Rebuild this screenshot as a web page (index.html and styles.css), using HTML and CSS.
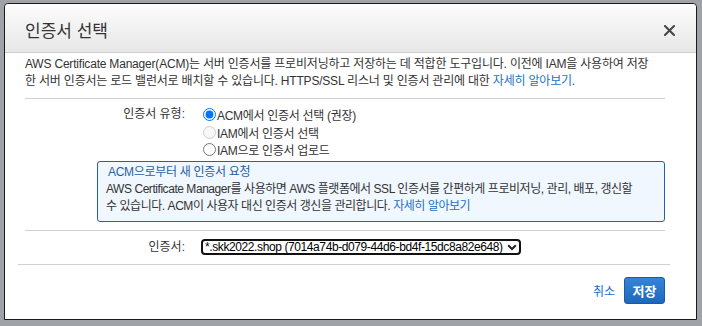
FILE: index.html
```html
<!DOCTYPE html>
<html lang="ko">
<head>
<meta charset="utf-8">
<title>인증서 선택</title>
<link rel="stylesheet" href="styles.css">
</head>
<body>
<div class="dialog">
  <div class="dialog-header">
    <h1 class="dialog-title">인증서 선택</h1>
    <button class="close-btn" aria-label="닫기">
      <svg width="11" height="11" viewBox="0 0 11 11"><path d="M1 1 L10 10 M10 1 L1 10" stroke="#444" stroke-width="2" stroke-linecap="square"/></svg>
    </button>
  </div>
  <div class="dialog-body">
    <p class="intro">AWS Certificate Manager(ACM)는 서버 인증서를 프로비저닝하고 저장하는 데 적합한 도구입니다. 이전에 IAM을 사용하여 저장<br>한 서버 인증서는 로드 밸런서로 배치할 수 있습니다. HTTPS/SSL 리스너 및 인증서 관리에 대한 <a href="#" class="link">자세히 알아보기</a>.</p>
    <div class="divider"></div>
    <div class="form-row type-row">
      <div class="label">인증서 유형:</div>
      <div class="radios">
        <label class="radio"><input type="radio" name="t" checked> ACM에서 인증서 선택 (권장)</label>
        <label class="radio disabled"><input type="radio" name="t" disabled> IAM에서 인증서 선택</label>
        <label class="radio"><input type="radio" name="t"> IAM으로 인증서 업로드</label>
      </div>
    </div>
    <div class="info-box">
      <div class="info-title">ACM으로부터 새 인증서 요청</div>
      <div class="info-text">AWS Certificate Manager를 사용하면 AWS 플랫폼에서 SSL 인증서를 간편하게 프로비저닝, 관리, 배포, 갱신할<br>수 있습니다. ACM이 사용자 대신 인증서 갱신을 관리합니다. <a href="#" class="link">자세히 알아보기</a></div>
    </div>
    <div class="divider spaced"></div>
    <div class="form-row cert-row">
      <div class="label">인증서:</div>
      <div class="select">
        <span class="select-text">*.skk2022.shop (7014a74b-d079-44d6-bd4f-15dc8a82e648)</span>
        <svg class="chev" width="10" height="7" viewBox="0 0 10 7"><path d="M1.2 1.2 L5 5 L8.8 1.2" fill="none" stroke="#222" stroke-width="2"/></svg>
      </div>
    </div>
    <div class="divider wide"></div>
    <div class="footer">
      <a href="#" class="link cancel">취소</a>
      <button class="save-btn">저장</button>
    </div>
  </div>
</div>
</body>
</html>
```
FILE: styles.css
```css
html, body {
  margin: 0;
  padding: 0;
}
body {
  background: #9fa3a7;
  width: 702px;
  height: 326px;
  overflow: hidden;
  font-family: "Liberation Sans", "Noto Sans CJK KR", sans-serif;
  font-size: 12px;
  color: #333;
}
.dialog {
  margin: 3px 0 0 4px;
  width: 691px;
  height: 315px;
  background: #fff;
  border: 1px solid #1b1b1b;
  border-radius: 4px 4px 0 0;
}
.dialog-header {
  height: 48px;
  display: flex;
  align-items: center;
  justify-content: space-between;
  padding: 0 20px 0 20px;
  background: linear-gradient(#fcfcfc, #e7e7e7);
  border-bottom: 1px solid #cfcfcf;
  border-radius: 4px 4px 0 0;
}
.dialog-title {
  margin: 0 0 0 0;
  font-size: 17px;
  font-weight: normal;
  color: #333;
  letter-spacing: 0;
  position: relative;
  top: 1px;
}
.close-btn {
  border: 0;
  background: none;
  padding: 0;
  margin-right: 1px;
  display: flex;
  margin-top: 4px;
}
.dialog-body {
  padding: 3px 31px 0 20px;
}
.intro {
  margin: 0;
  line-height: 17px;
  white-space: nowrap;
  letter-spacing: -0.2px;
}
.link {
  color: #1a6fc4;
  text-decoration: none;
}
.divider {
  height: 1px;
  background: #d0d0d0;
  margin-top: 8px;
}
.divider.spaced {
  margin-top: 8px;
}
.divider.wide {
  margin: 8px -5px 0 -7px;
}
.form-row {
  display: grid;
  grid-template-columns: 160px 1fr;
  column-gap: 16px;
}
.type-row {
  margin-top: 7px;
}
.label {
  text-align: right;
  line-height: 17px;
  letter-spacing: 0;
}
.radios {
  display: flex;
  flex-direction: column;
  margin-left: 2px;
}
.radio {
  display: flex;
  align-items: center;
  height: 17.5px;
  letter-spacing: -0.3px;
}
.radio input {
  margin: 0 1px 0 0;
  width: 13px;
  height: 13px;
}
.info-box {
  margin: 2px 0 0 72px;
  border: 1px solid #1e63b0;
  border-radius: 3px;
  background: #f0f7ff;
  padding: 2px 8px 6px 8px;
  line-height: 17px;
}
.info-title {
  color: #1f5fa8;
  letter-spacing: -0.3px;
  padding-left: 2px;
}
.info-text {
  white-space: nowrap;
  letter-spacing: -0.45px;
}
.cert-row {
  margin-top: 8px;
  align-items: center;
}
.select {
  width: 312px;
  height: 12px;
  border: 2px solid #111;
  border-radius: 4px;
  display: flex;
  align-items: center;
  justify-content: space-between;
  padding: 0 2px 0 2px;
  color: #000;
  line-height: 12px;
  white-space: nowrap;
  overflow: hidden;
}
.select-text {
  letter-spacing: -0.4px;
}
.chev {
  margin-left: 2px;
  flex-shrink: 0;
}
.footer {
  display: flex;
  justify-content: flex-end;
  align-items: center;
  gap: 9px;
  margin-top: 12px;
}
.cancel {
  font-size: 12px;
  margin-top: 1px;
}
.save-btn {
  width: 41px;
  height: 27px;
  border: 1px solid #1a5ba5;
  border-radius: 3px;
  background: linear-gradient(#3584d6, #1d68bd);
  color: #fff;
  font-family: "Liberation Sans", "Noto Sans CJK KR", sans-serif;
  font-weight: bold;
  font-size: 13px;
  padding: 0;
}
```
